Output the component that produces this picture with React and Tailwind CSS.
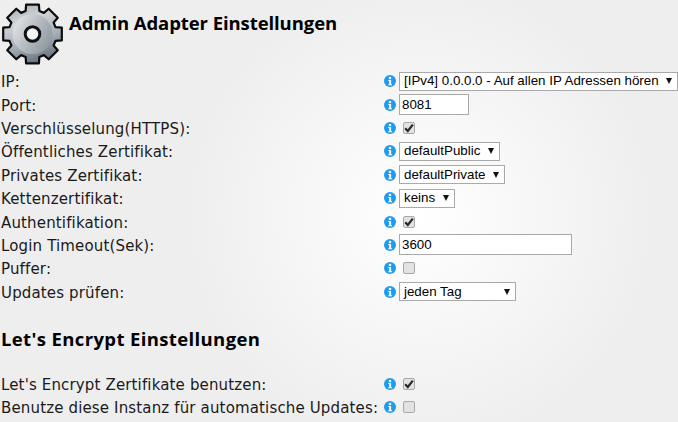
import React from "react";

function gearPath() {
  const cx = 32.5, cy = 34, teeth = 8, rOut = 30, rIn = 24;
  const pts = [];
  for (let i = 0; i < teeth; i++) {
    const a = (i * 2 * Math.PI) / teeth - Math.PI / 2;
    const w1 = 0.29, w2 = 0.215;
    pts.push([a - w1, rIn], [a - w2, rOut], [a + w2, rOut], [a + w1, rIn]);
  }
  return pts
    .map(([a, r], i) => `${i ? "L" : "M"}${(cx + r * Math.cos(a)).toFixed(2)} ${(cy + r * Math.sin(a)).toFixed(2)}`)
    .join(" ") + " Z";
}

function Gear() {
  return (
    <svg width="66" height="68" viewBox="0 0 66 68" className="shrink-0">
      <defs>
        <linearGradient id="gearFill" x1="0.15" y1="0" x2="0.5" y2="1">
          <stop offset="0" stopColor="#a4abb2" />
          <stop offset="0.3" stopColor="#cfd3d7" />
          <stop offset="0.65" stopColor="#a9b0b8" />
          <stop offset="1" stopColor="#6a7682" />
        </linearGradient>
        <linearGradient id="gearInner" x1="0" y1="0.2" x2="1" y2="0.8">
          <stop offset="0" stopColor="#e4e6e8" />
          <stop offset="0.5" stopColor="#b4bac0" />
          <stop offset="1" stopColor="#8b949c" />
        </linearGradient>
      </defs>
      <path d={gearPath()} fill="url(#gearFill)" stroke="#0c0c0c" strokeWidth="2.2" strokeLinejoin="round" />
      <circle cx="32.5" cy="34" r="20" fill="url(#gearInner)" />
      <circle cx="32.5" cy="34" r="7.3" fill="#f4f4f4" stroke="#111" strokeWidth="3" />
    </svg>
  );
}

function Info() {
  return (
    <svg width="12" height="12" viewBox="0 0 12 12" className="shrink-0">
      <circle cx="6" cy="6" r="6" fill="#1e9bf0" />
      <circle cx="6" cy="3" r="1.3" fill="#fff" />
      <path d="M4.2 5h2.9v4.2h1v1H4.2v-1h1V6h-1z" fill="#fff" />
    </svg>
  );
}

function Check({ on }) {
  return (
    <span className="ml-[4px] flex h-[12px] w-[12px] items-center justify-center rounded-[2px] border border-[#a8a8a8] bg-[#e2e2e2]">
      {on && (
        <svg width="10" height="10" viewBox="0 0 10 10">
          <path d="M1.2 5.2 L3.8 8 L8.8 1.6" fill="none" stroke="#2a2a2a" strokeWidth="2.2" />
        </svg>
      )}
    </span>
  );
}

const arial = { fontFamily: "'Liberation Sans', Arial, sans-serif", letterSpacing: "0" };

function Sel({ w, children }) {
  return (
    <div
      className={`flex h-[19px] ${w} items-center border border-[#a9a9a9] bg-white pl-[4px] pr-[5px] text-[13.33px] text-black`}
      style={arial}
    >
      <span className="whitespace-nowrap">{children}</span>
      <svg width="6" height="6" viewBox="0 0 6 6" className="ml-auto shrink-0">
        <path d="M0 0h6L3 6z" fill="#111" />
      </svg>
    </div>
  );
}

function Text({ w, value }) {
  return (
    <input
      readOnly
      value={value}
      className={`${w} h-[21px] border border-[#a9a9a9] bg-white pl-[2px] text-[13.33px] text-black outline-none`}
      style={arial}
    />
  );
}

function Row({ label, children }) {
  return (
    <div className="flex h-[23.4px] items-center">
      <div className="w-[383.5px] shrink-0 whitespace-nowrap pl-[1px] pt-[2px]">{label}</div>
      <Info />
      <div className="ml-[3.5px] flex items-center">{children}</div>
    </div>
  );
}

const head = { fontFamily: "'Open Sans', sans-serif" };

export default function App() {
  return (
    <div
      className="h-[422px] w-[678px] overflow-hidden leading-[20px] text-[#1a1a1a] bg-[radial-gradient(circle_at_420px_215px,#ffffff_0px,#eeeeee_235px)]"
    >
      <div className="flex h-[69.5px] items-start">
        <Gear />
        <h1
          className="ml-[3px] mt-[11px] text-[18.5px] font-bold leading-[24px] text-black"
          style={{ ...head, letterSpacing: "-0.08px" }}
        >
          Admin Adapter Einstellungen
        </h1>
      </div>
      <div style={{ fontFamily: "'DejaVu Sans', sans-serif", fontSize: "15px", letterSpacing: "0.15px" }}>
        <Row label="IP:"><Sel w="w-[279px]">[IPv4] 0.0.0.0 - Auf allen IP Adressen hören</Sel></Row>
        <Row label="Port:"><Text w="w-[70px]" value="8081" /></Row>
        <Row label="Verschlüsselung(HTTPS):"><Check on /></Row>
        <Row label="Öffentliches Zertifikat:"><Sel w="w-[101px]">defaultPublic</Sel></Row>
        <Row label="Privates Zertifikat:"><Sel w="w-[106px]">defaultPrivate</Sel></Row>
        <Row label="Kettenzertifikat:"><Sel w="w-[56px]">keins</Sel></Row>
        <Row label="Authentifikation:"><Check on /></Row>
        <Row label="Login Timeout(Sek):"><Text w="w-[173px]" value="3600" /></Row>
        <Row label="Puffer:"><Check /></Row>
        <Row label="Updates prüfen:"><Sel w="w-[117px]">jeden Tag</Sel></Row>
        <h2
          className="mt-[24px] mb-[21px] pl-[1px] text-[18.5px] font-bold leading-[24px] text-black"
          style={{ ...head, letterSpacing: "0.37px" }}
        >
          Let's Encrypt Einstellungen
        </h2>
        <Row label="Let's Encrypt Zertifikate benutzen:"><Check on /></Row>
        <Row label="Benutze diese Instanz für automatische Updates:"><Check /></Row>
      </div>
    </div>
  );
}
